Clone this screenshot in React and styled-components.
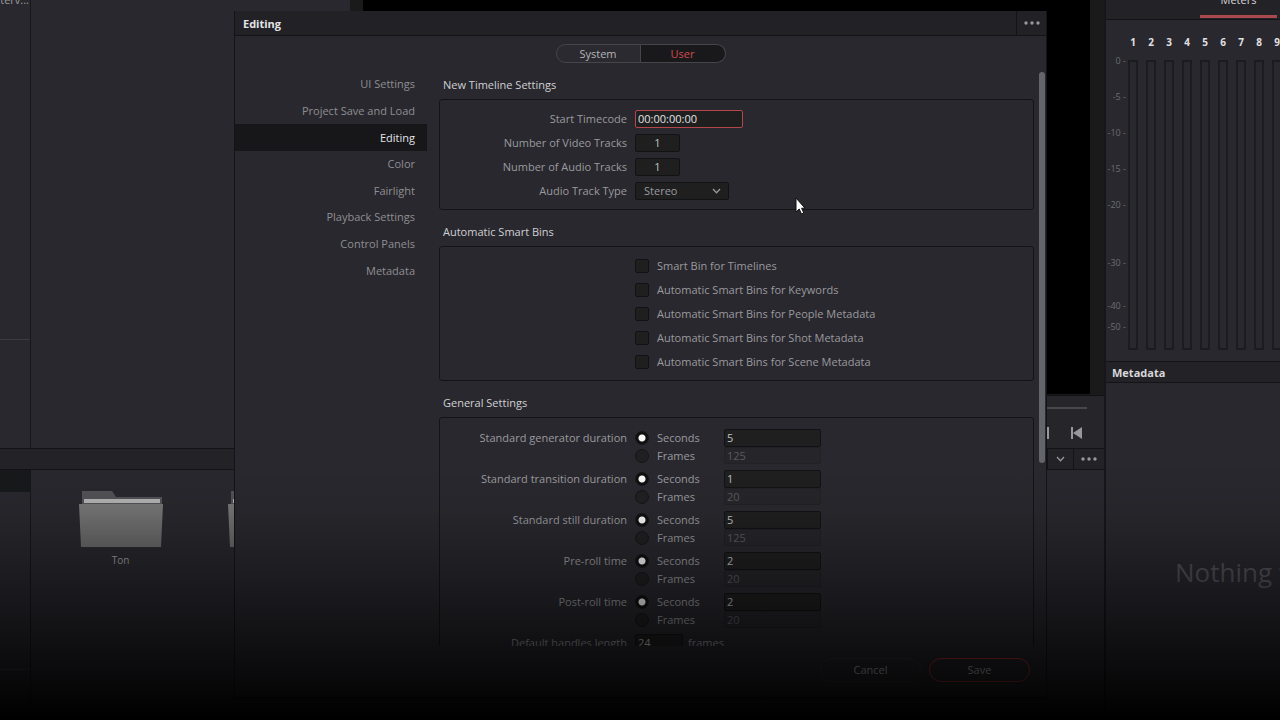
import React, { useState } from "react";
import styled, { createGlobalStyle, css } from "styled-components";

const GlobalStyle = createGlobalStyle`
  * {
    box-sizing: border-box;
  }

  body {
    margin: 0;
    background: #000;
    color: #9a9a9e;
    font-family: "Open Sans", "Noto Sans", sans-serif;
    font-size: 11px;
    line-height: 18px;
    overflow: hidden;
  }

  button, input, select {
    font: inherit;
    color: inherit;
    margin: 0;
  }
`;

/* Workspace behind the dialog */

const Workspace = styled.div`
  display: grid;
  grid-template-columns: 1fr 176px;
  height: 100vh;
  overflow: hidden;
  background: #29282e;
`;

const MainArea = styled.main`
  display: grid;
  grid-template-rows: 448px 22px 1fr;
  min-width: 0;
`;

const UpperRow = styled.div`
  display: grid;
  grid-template-columns: 31px 319px 1fr;
  min-height: 0;
`;

const BinColumn = styled.div`
  border-right: 1px solid #17171b;
  overflow: hidden;
`;

const BinSplit = styled.div`
  height: 340px;
  border-bottom: 1px solid #3a3a3f;
`;

const BinName = styled.div`
  display: flex;
  align-items: flex-end;
  justify-content: flex-end;
  height: 5px;
  padding-right: 1px;
  line-height: 10px;
  overflow: hidden;
`;

const Viewer = styled.section`
  display: flex;
  flex-direction: column;
`;

const ViewerFrame = styled.div`
  height: 396px;
  padding: 0 14px 1px 13px;
  background: #1a1a1b;
  border-bottom: 1px solid #111113;
`;

const ViewerScreen = styled.div`
  height: 100%;
  background: #000;
`;

const Transport = styled.div`
  flex: 1;
  background: #26252a;
`;

const Scrubber = styled.div`
  height: 13px;
  margin-right: 17px;
  border-bottom: 2px solid #48484c;
`;

const TransportButtons = styled.div`
  display: flex;
  justify-content: flex-end;
  gap: 22px;
  padding: 18px 22px 0 0;
`;

const IconButton = styled.button`
  display: flex;
  align-items: center;
  justify-content: center;
  padding: 0;
  border: 0;
  background: none;
  color: #98989b;
`;

const Toolbar = styled.div`
  display: flex;
  justify-content: flex-end;
  background: #232226;
  border: solid #141418;
  border-width: 1px 0;
`;

const ToolbarButton = styled(IconButton)`
  width: ${props => props.$width}px;
  border-left: 1px solid #141418;
`;

const LowerRow = styled.div`
  display: grid;
  grid-template-columns: 31px 1fr;
  min-height: 0;
`;

const ActiveBin = styled.div`
  height: 22px;
  background: #17191a;
`;

const LowerSplit = styled.div`
  height: 178px;
  border-bottom: 1px solid #3e3e43;
`;

const MediaPool = styled.div`
  display: flex;
  padding: 20px 0 0 15px;
  overflow: hidden;
`;

const Clip = styled.figure`
  flex: none;
  display: flex;
  flex-direction: column;
  align-items: center;
  width: 149px;
  margin: 0;
`;

const ClipName = styled.figcaption`
  margin-top: 4px;
  font-size: 10px;
`;

/* Right hand panels */

const SidePanels = styled.aside`
  display: flex;
  flex-direction: column;
  min-width: 0;
  overflow: hidden;
  border-left: 2px solid #17171b;
`;

const MetersHeader = styled.div`
  display: flex;
  justify-content: flex-end;
  align-items: flex-end;
  height: 20px;
  padding: 0 3px 1px 0;
  background: #232226;
  border-bottom: 1px solid #141418;
`;

const MetersTab = styled.button`
  width: 77px;
  height: 28px;
  padding: 0 0 5px;
  border: 0;
  border-bottom: 3px solid #a8494d;
  background: none;
  color: #d4d4d6;
  line-height: 18px;
`;

const MetersBody = styled.div`
  display: flex;
  height: 341px;
  padding: 13px 0 0;
`;

const Scale = styled.ol`
  flex: none;
  width: 20px;
  margin: 0;
  padding: 21px 0 0;
  list-style: none;
  color: #6c6c70;
  font-size: 9px;
  line-height: 14px;
  text-align: right;
  white-space: nowrap;
`;

const ScaleMark = styled.li`
  height: ${props => props.$span}px;
`;

const Channels = styled.div`
  display: flex;
  margin-left: -2px;
`;

const Channel = styled.div`
  flex: none;
  display: flex;
  flex-direction: column;
  align-items: center;
  width: 18px;
  color: #e0e0e2;
  font-size: 10px;
  font-weight: 700;
`;

const ChannelBar = styled.div`
  width: 10px;
  height: 290px;
  margin-top: 9px;
  border: 2px solid #1c1c20;
`;

const PanelHeader = styled.h2`
  flex: none;
  height: 22px;
  margin: 0;
  padding: 0 6px;
  background: #232226;
  border: solid #141418;
  border-width: 1px 0;
  color: #d8d8da;
  font-size: 11px;
  font-weight: 700;
  line-height: 21px;
`;

const PanelBody = styled.div`
  flex: 1;
  display: flex;
  align-items: center;
  padding: 41px 0 0 69px;
  color: #515158;
  font-size: 26px;
  line-height: 34px;
  white-space: nowrap;
`;

/* Preferences dialog */

const Overlay = styled.div`
  position: fixed;
  inset: 0;
  display: grid;
  padding: 11px 233px 22px 234px;
`;

const Dialog = styled.div`
  display: grid;
  grid-template-rows: 25px 35px 1fr 51px;
  min-height: 0;
  background: #29282e;
  border: solid #141418;
  border-width: 0 1px 1px;
`;

const DialogHeader = styled.header`
  display: flex;
  justify-content: space-between;
  padding-left: 8px;
  background: #222226;
  border-bottom: 1px solid #141418;
`;

const DialogTitle = styled.h1`
  margin: 0;
  color: #e4e4e6;
  font-size: 11px;
  font-weight: 700;
  line-height: 26px;
`;

const Tabs = styled.div`
  display: flex;
  justify-content: center;
  align-items: center;
`;

const Tab = styled.button`
  width: 85px;
  height: 19px;
  padding: 0;
  border: 1px solid #45454a;
  border-radius: 10px 0 0 10px;
  background: #2b2a30;
  color: #b4b4b7;
  line-height: 18px;

  & + & {
    border-left: 0;
    border-radius: 0 10px 10px 0;
  }

  ${props =>
    props.$active &&
    css`
      background: #19191b;
      color: #d24a50;
    `}
`;

const DialogBody = styled.div`
  display: grid;
  grid-template-columns: 192px 1fr;
  min-height: 0;
`;

const Nav = styled.nav`
  display: grid;
  grid-auto-rows: 1fr;
  height: 213px;
`;

const NavItem = styled.a`
  display: flex;
  align-items: center;
  justify-content: flex-end;
  padding-right: 12px;
  background: ${props => (props.$active ? "#17171a" : "none")};
  color: ${props => (props.$active ? "#e4e4e6" : "#8e8e92")};
  text-decoration: none;
`;

const ScrollArea = styled.div`
  display: flex;
  justify-content: space-between;
  min-height: 0;
  padding: 0 1px 0 12px;
  overflow: hidden;
`;

const Sections = styled.form`
  flex: 1;
`;

const ScrollThumb = styled.div`
  width: 6px;
  height: 391px;
  margin: 1px 0 0 5px;
  border-radius: 3px;
  background: #64656a;
`;

const SectionTitle = styled.h2`
  margin: 0;
  padding-left: 4px;
  color: #d0d0d3;
  font-size: 11px;
  font-weight: 400;
  line-height: 28px;
`;

const SectionBox = styled.div`
  margin-bottom: 8px;
  padding: 7px 0 6px;
  border: 1px solid #141418;
  border-radius: 3px;
`;

const GeneralBox = styled(SectionBox)`
  display: grid;
  gap: 6px;
  padding-top: 11px;
`;

const Row = styled.div`
  display: grid;
  grid-template-columns: 187px 1fr;
  column-gap: 8px;
  align-items: center;
  height: 24px;
`;

const DurationRow = styled(Row)`
  align-items: start;
  height: 35px;
`;

const Label = styled.label`
  text-align: right;
  white-space: nowrap;
`;

const GroupLabel = styled.span`
  text-align: right;
  white-space: nowrap;
`;

const TextField = styled.input`
  width: ${props => props.$width}px;
  height: 18px;
  padding: 0 ${props => (props.$centered ? 0 : 2)}px;
  border: 1px solid #121214;
  border-radius: 2px;
  outline: 0;
  background: #1f1f20;
  color: #c0c0c2;
  text-align: ${props => (props.$centered ? "center" : "left")};

  &:disabled {
    height: 17px;
    border-color: #212126;
    background: #26262a;
    color: #5a5a5f;
  }
`;

const TimecodeField = styled(TextField)`
  border-color: #b4474b;
  color: #e2e2e4;
`;

const SelectWrap = styled.div`
  display: grid;
  grid-template-columns: 1fr 16px;
  align-items: center;
  width: 94px;
  height: 18px;
  border: 1px solid #121214;
  border-radius: 2px;
  background: #1f1f20;
`;

const Select = styled.select`
  grid-area: 1 / 1 / 2 / 3;
  width: 100%;
  height: 16px;
  padding: 0 8px;
  border: 0;
  outline: 0;
  appearance: none;
  background: none;
  line-height: 16px;
`;

const SelectArrow = styled.span`
  grid-area: 1 / 2;
  display: flex;
  pointer-events: none;
`;

const Choice = styled.label`
  display: flex;
  align-items: center;
  gap: 8px;
`;

const CheckBox = styled.input`
  appearance: none;
  width: 14px;
  height: 14px;
  border: 1px solid #121214;
  border-radius: 2px;
  background: #1f1f20;

  &:checked {
    background: #96969a;
  }
`;

const Radio = styled.input`
  appearance: none;
  width: 14px;
  height: 14px;
  border: 1px solid #151517;
  border-radius: 50%;
  background: #202022;

  &:checked {
    background: radial-gradient(#f8f8f8 0 3px, #101011 4px);
  }
`;

const DurationGrid = styled.div`
  display: grid;
  grid-template-columns: 89px 1fr;
  grid-template-rows: 18px 17px;
  align-items: center;
`;

const HandlesField = styled.div`
  display: flex;
  gap: 5px;
`;

const DialogFooter = styled.footer`
  display: flex;
  justify-content: flex-end;
  align-items: flex-start;
  gap: 8px;
  padding: 12px 16px 0 0;
`;

const ActionButton = styled.button`
  width: 101px;
  height: 24px;
  padding: 0;
  border: 1px solid ${props => (props.$primary ? "#c0363d" : "#36363b")};
  border-radius: 12px;
  background: none;
  color: #c8c8cb;
  line-height: 22px;
`;

const Pointer = styled.svg`
  position: fixed;
  left: 795px;
  top: 197px;
  pointer-events: none;
`;

const Fade = styled.div`
  position: fixed;
  inset: 0;
  pointer-events: none;
  background: linear-gradient(
    transparent 65%,
    rgba(0, 0, 0, 0.06) 71%,
    rgba(0, 0, 0, 0.22) 77%,
    rgba(0, 0, 0, 0.4) 83%,
    rgba(0, 0, 0, 0.6) 89%,
    rgba(0, 0, 0, 0.8) 95%,
    #000 100%
  );
`;

const navItems = [
  "UI Settings",
  "Project Save and Load",
  "Editing",
  "Color",
  "Fairlight",
  "Playback Settings",
  "Control Panels",
  "Metadata"
];

const smartBins = [
  "Smart Bin for Timelines",
  "Automatic Smart Bins for Keywords",
  "Automatic Smart Bins for People Metadata",
  "Automatic Smart Bins for Shot Metadata",
  "Automatic Smart Bins for Scene Metadata"
];

const durations = [
  { id: "generator", label: "Standard generator duration", seconds: 5, frames: 125 },
  { id: "transition", label: "Standard transition duration", seconds: 1, frames: 20 },
  { id: "still", label: "Standard still duration", seconds: 5, frames: 125 },
  { id: "preroll", label: "Pre-roll time", seconds: 2, frames: 20 },
  { id: "postroll", label: "Post-roll time", seconds: 2, frames: 20 }
];

// span is the distance in pixels to the next mark
const scaleMarks = [
  { value: "0", span: 36 },
  { value: "-5", span: 36 },
  { value: "-10", span: 36 },
  { value: "-15", span: 36 },
  { value: "-20", span: 58 },
  { value: "-30", span: 43 },
  { value: "-40", span: 21 },
  { value: "-50", span: 14 }
];

const channels = [1, 2, 3, 4, 5, 6, 7, 8, 9];

const Dots = () => (
  <svg width="16" height="4" viewBox="0 0 16 4" fill="currentColor">
    <circle cx="2" cy="2" r="1.7" />
    <circle cx="8" cy="2" r="1.7" />
    <circle cx="14" cy="2" r="1.7" />
  </svg>
);

const Chevron = () => (
  <svg width="9" height="6" viewBox="0 0 9 6" fill="none" stroke="currentColor" strokeWidth="1.3">
    <path d="M1 1l3.5 3.7L8 1" />
  </svg>
);

const Folder = () => (
  <svg width="84" height="57" viewBox="0 0 84 57">
    <defs>
      <linearGradient id="folderFront" x1="0" y1="0" x2="0" y2="1">
        <stop offset="0" stopColor="#777778" />
        <stop offset="1" stopColor="#686869" />
      </linearGradient>
    </defs>
    <path d="M3 1h30l4 6h46v20H3z" fill="#535257" />
    <path d="M5 9h76v4H5z" fill="#b2b2b3" />
    <path d="M0 14h84l-2 43H2z" fill="url(#folderFront)" />
  </svg>
);

const Background = () => (
  <Workspace>
    <MainArea>
      <UpperRow>
        <BinColumn>
          <BinSplit>
            <BinName>Interv...</BinName>
          </BinSplit>
        </BinColumn>
        <div />
        <Viewer>
          <ViewerFrame>
            <ViewerScreen />
          </ViewerFrame>
          <Transport>
            <Scrubber />
            <TransportButtons>
              <IconButton aria-label="Last frame">
                <svg width="10" height="12" viewBox="0 0 10 12" fill="currentColor">
                  <path d="M0 1l8 5-8 5zM8 0h2v12H8z" />
                </svg>
              </IconButton>
              <IconButton aria-label="First frame">
                <svg width="11" height="12" viewBox="0 0 11 12" fill="currentColor">
                  <path d="M0 0h2v12H0zM11 0v12L2 6z" />
                </svg>
              </IconButton>
            </TransportButtons>
          </Transport>
        </Viewer>
      </UpperRow>
      <Toolbar>
        <ToolbarButton $width={26} aria-label="View menu">
          <Chevron />
        </ToolbarButton>
        <ToolbarButton $width={31} aria-label="More options">
          <Dots />
        </ToolbarButton>
      </Toolbar>
      <LowerRow>
        <BinColumn>
          <ActiveBin />
          <LowerSplit />
        </BinColumn>
        <MediaPool>
          <Clip>
            <Folder />
            <ClipName>Ton</ClipName>
          </Clip>
          <Clip>
            <Folder />
          </Clip>
        </MediaPool>
      </LowerRow>
    </MainArea>
    <SidePanels>
      <MetersHeader>
        <MetersTab>Meters</MetersTab>
      </MetersHeader>
      <MetersBody>
        <Scale>
          {scaleMarks.map(mark => (
            <ScaleMark key={mark.value} $span={mark.span}>
              {mark.value} -
            </ScaleMark>
          ))}
        </Scale>
        <Channels>
          {channels.map(channel => (
            <Channel key={channel}>
              {channel}
              <ChannelBar />
            </Channel>
          ))}
        </Channels>
      </MetersBody>
      <PanelHeader>Metadata</PanelHeader>
      <PanelBody>Nothing to inspect</PanelBody>
    </SidePanels>
  </Workspace>
);

const Duration = ({ id, label, seconds, frames }) => {
  const [unit, setUnit] = useState("seconds");

  return (
    <DurationRow role="radiogroup" aria-labelledby={`${id}-label`}>
      <GroupLabel id={`${id}-label`}>{label}</GroupLabel>
      <DurationGrid>
        <Choice>
          <Radio
            type="radio"
            name={id}
            checked={unit === "seconds"}
            onChange={() => setUnit("seconds")}
          />
          Seconds
        </Choice>
        <TextField
          $width={97}
          aria-label={`${label} in seconds`}
          defaultValue={seconds}
          disabled={unit !== "seconds"}
        />
        <Choice>
          <Radio
            type="radio"
            name={id}
            checked={unit === "frames"}
            onChange={() => setUnit("frames")}
          />
          Frames
        </Choice>
        <TextField
          $width={97}
          aria-label={`${label} in frames`}
          defaultValue={frames}
          disabled={unit !== "frames"}
        />
      </DurationGrid>
    </DurationRow>
  );
};

const Settings = () => (
  <Sections>
    <SectionTitle>New Timeline Settings</SectionTitle>
    <SectionBox>
      <Row>
        <Label htmlFor="timecode">Start Timecode</Label>
        <TimecodeField id="timecode" $width={108} defaultValue="00:00:00:00" />
      </Row>
      <Row>
        <Label htmlFor="video-tracks">Number of Video Tracks</Label>
        <TextField id="video-tracks" $width={45} $centered defaultValue="1" />
      </Row>
      <Row>
        <Label htmlFor="audio-tracks">Number of Audio Tracks</Label>
        <TextField id="audio-tracks" $width={45} $centered defaultValue="1" />
      </Row>
      <Row>
        <Label htmlFor="track-type">Audio Track Type</Label>
        <SelectWrap>
          <Select id="track-type" defaultValue="Stereo">
            <option>Stereo</option>
          </Select>
          <SelectArrow>
            <Chevron />
          </SelectArrow>
        </SelectWrap>
      </Row>
    </SectionBox>

    <SectionTitle>Automatic Smart Bins</SectionTitle>
    <SectionBox>
      {smartBins.map(name => (
        <Row key={name}>
          <span />
          <Choice>
            <CheckBox type="checkbox" />
            {name}
          </Choice>
        </Row>
      ))}
    </SectionBox>

    <SectionTitle>General Settings</SectionTitle>
    <GeneralBox>
      {durations.map(duration => (
        <Duration key={duration.id} {...duration} />
      ))}
      <DurationRow>
        <Label htmlFor="handles">Default handles length</Label>
        <HandlesField>
          <TextField id="handles" $width={48} defaultValue="24" />
          frames
        </HandlesField>
      </DurationRow>
    </GeneralBox>
  </Sections>
);

const App = () => {
  const [tab, setTab] = useState("User");
  const [page, setPage] = useState("Editing");

  return (
    <>
      <GlobalStyle />
      <Background />
      <Overlay>
        <Dialog role="dialog" aria-labelledby="dialog-title">
          <DialogHeader>
            <DialogTitle id="dialog-title">{page}</DialogTitle>
            <ToolbarButton $width={30} aria-label="Dialog options">
              <Dots />
            </ToolbarButton>
          </DialogHeader>
          <Tabs>
            {["System", "User"].map(name => (
              <Tab key={name} $active={tab === name} onClick={() => setTab(name)}>
                {name}
              </Tab>
            ))}
          </Tabs>
          <DialogBody>
            <Nav>
              {navItems.map(item => (
                <NavItem
                  key={item}
                  href="#"
                  $active={item === page}
                  onClick={() => setPage(item)}
                >
                  {item}
                </NavItem>
              ))}
            </Nav>
            <ScrollArea>
              <Settings />
              <ScrollThumb />
            </ScrollArea>
          </DialogBody>
          <DialogFooter>
            <ActionButton>Cancel</ActionButton>
            <ActionButton $primary>Save</ActionButton>
          </DialogFooter>
        </Dialog>
      </Overlay>
      <Pointer width="11" height="18" viewBox="0 0 11 18">
        <path
          d="M1 1v14l3.2-3 2.3 5 2.3-1-2.2-4.8H10z"
          fill="#fff"
          stroke="#111"
          strokeWidth="1"
        />
      </Pointer>
      <Fade />
    </>
  );
};

export default App;
